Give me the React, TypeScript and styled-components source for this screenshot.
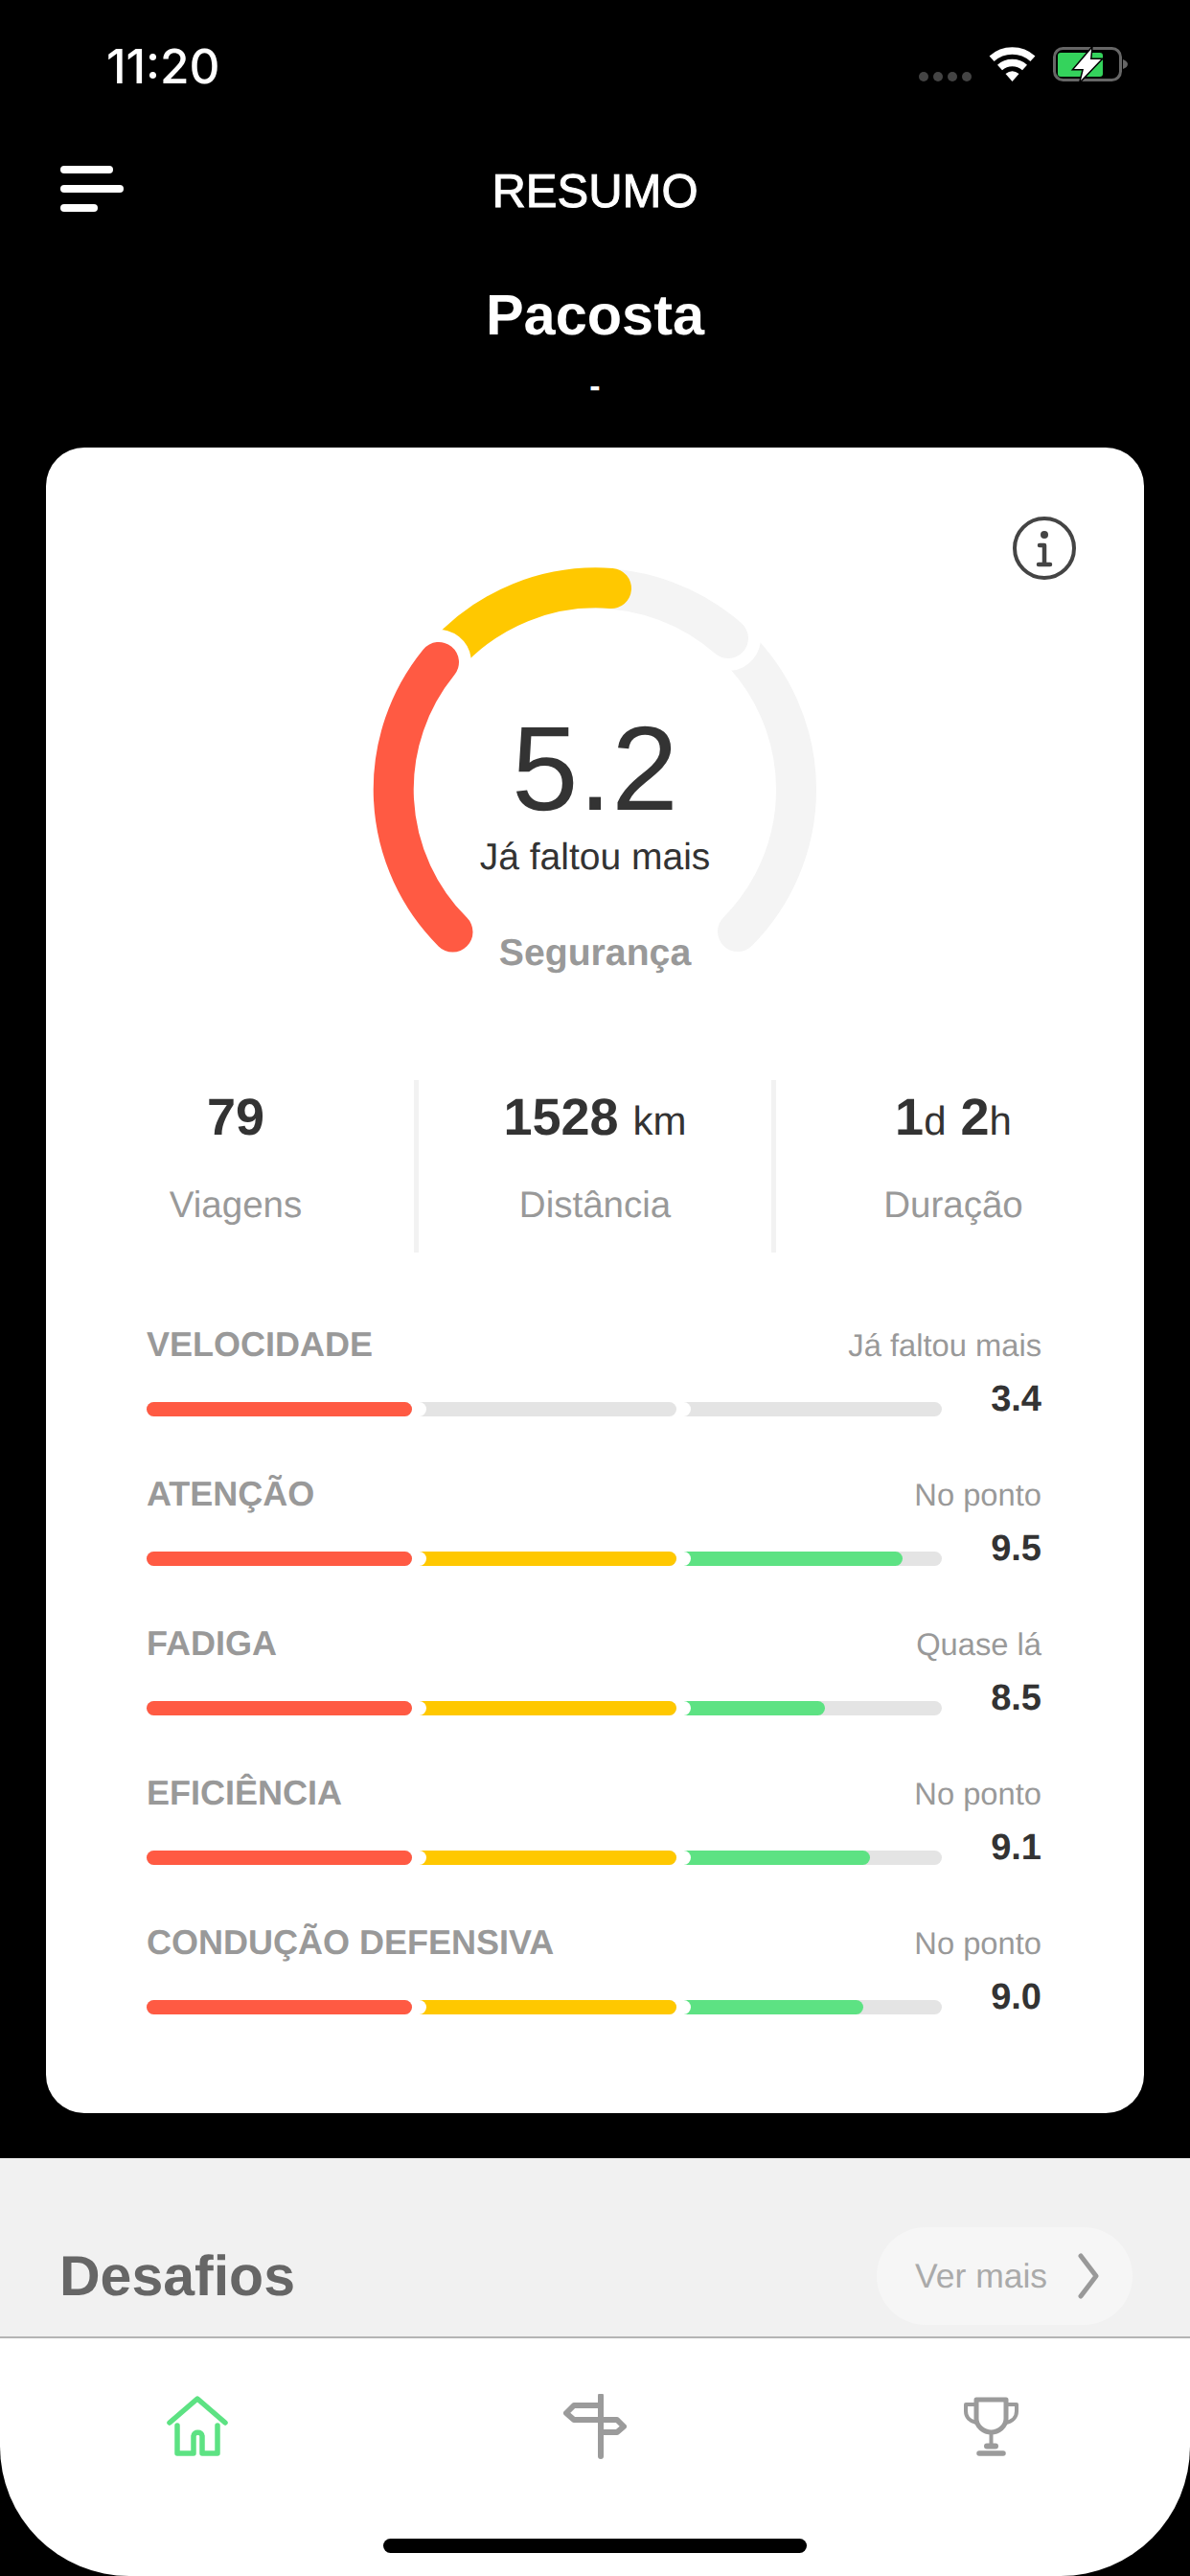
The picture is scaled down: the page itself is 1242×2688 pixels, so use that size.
import React from 'react';
import styled, { createGlobalStyle } from 'styled-components';

const GlobalStyle = createGlobalStyle`
    html, body {
        margin:0;
        padding:0;
        background:#000;
    }
    body {
        font-family:"Liberation Sans", Arial, sans-serif;
        text-rendering:geometricPrecision;
    }
`

const Screen = styled.div`
    display:flex;
    flex-direction:column;
    width:1242px;
    height:2688px;
    overflow:hidden;
    background:#000;
`

const StatusBar = styled.div`
    display:flex;
    justify-content:space-between;
    align-items:flex-start;
    height:100px;
    padding:0 63px 0 111px;
    box-sizing:border-box;
`
const Time = styled.span`
    margin-top:41px;
    font-family:Inter, "Liberation Sans", sans-serif;
    font-weight:500;
    font-size:49.5px;
    line-height:56px;
    color:#fff;
`
const StatusIcons = styled.svg`
    display:block;
    margin-top:49px;
`

const Nav = styled.header`
    display:grid;
    grid-template-columns:1fr auto 1fr;
    align-items:center;
    height:60px;
    margin-top:70px;
    padding-left:63px;
    padding-right:63px;
`
const Burger = styled.div`
    display:flex;
    flex-direction:column;
    gap:12px;
    margin-top:-7px;
`
const BurgerLine = styled.span<{ $w: number }>`
    display:block;
    width:${({ $w }) => $w}px;
    height:8px;
    border-radius:4px;
    background:#fff;
`
const NavTitle = styled.h1`
    margin:0;
    font-weight:400;
    font-size:49px;
    line-height:60px;
    color:#fff;
    -webkit-text-stroke:1px #fff;
`

const Name = styled.div`
    margin-top:64px;
    text-align:center;
    font-weight:700;
    font-size:59.5px;
    line-height:70px;
    color:#fff;
`
const Dash = styled.div`
    margin-top:19px;
    text-align:center;
    font-weight:700;
    font-size:34px;
    line-height:40px;
    color:#fff;
`

const Card = styled.section`
    position:relative;
    height:1738px;
    margin:44px 48px 0 48px;
    padding-top:126px;
    box-sizing:border-box;
    border-radius:40px;
    background:#fff;
`
const InfoIcon = styled.svg`
    position:absolute;
    top:72px;
    right:71px;
`

const Gauge = styled.div`
    position:relative;
    width:462px;
    height:420px;
    margin:0 auto;
`
const GaugeSvg = styled.svg`
    display:block;
    overflow:visible;
`
const GaugeText = styled.div`
    position:absolute;
    top:145px;
    left:0;
    right:0;
    display:flex;
    flex-direction:column;
    align-items:center;
`
const Score = styled.span`
    font-size:125px;
    line-height:130px;
    color:#333;
`
const ScoreStatus = styled.span`
    margin-top:4px;
    font-size:39px;
    line-height:46px;
    color:#333;
`
const ScoreName = styled.span`
    margin-top:55px;
    font-weight:700;
    font-size:39.2px;
    line-height:44px;
    color:#999;
`

const Stats = styled.div`
    display:grid;
    grid-template-columns:372px 5px 368px 5px 370px;
    height:180px;
    margin:114px 0 0 12px;
`
const StatDivider = styled.div`
    background:#f2f2f2;
`
const Stat = styled.div`
    display:flex;
    flex-direction:column;
    align-items:center;
    padding-top:9px;
`
const StatValue = styled.div`
    height:60px;
    font-weight:700;
    font-size:54px;
    line-height:60px;
    color:#333;
    white-space:pre;
`
const StatUnit = styled.span`
    font-weight:400;
    font-size:42px;
`
const StatLabel = styled.div`
    margin-top:39px;
    font-size:38.5px;
    line-height:46px;
    color:#999;
`

const Metrics = styled.div`
    display:flex;
    flex-direction:column;
    gap:54px;
    margin-top:74px;
    padding:0 107px 0 105px;
`
const MetricHead = styled.div`
    display:flex;
    justify-content:space-between;
    align-items:baseline;
    height:44px;
`
const MetricName = styled.span`
    font-weight:700;
    font-size:36px;
    line-height:44px;
    color:#999;
`
const MetricStatus = styled.span`
    font-size:32.7px;
    line-height:44px;
    color:#999;
`
const MetricBody = styled.div`
    display:flex;
    justify-content:space-between;
    align-items:flex-start;
    margin-top:12px;
`
const MetricValue = styled.span`
    font-weight:700;
    font-size:38px;
    line-height:46px;
    color:#333;
`
const Track = styled.div`
    display:flex;
    width:830px;
    margin-top:26px;
`
const Segment = styled.div<{ $level: number; $color: string; $fill: number }>`
    position:relative;
    z-index:${({ $level }) => $level};
    flex:1;
    height:15px;
    border-radius:8px;
    background:#e4e4e4;
    box-shadow:15px 0 0 #fff;
    &::before {
        content:"";
        display:block;
        width:${({ $fill }) => $fill}%;
        height:100%;
        border-radius:8px;
        background:${({ $color }) => $color};
    }
`

const Challenges = styled.section`
    display:flex;
    justify-content:space-between;
    align-items:flex-end;
    height:186px;
    margin-top:47px;
    padding:0 60px 12px 62px;
    box-sizing:border-box;
    background:#f1f1f1;
`
const ChallengesTitle = styled.h2`
    margin:0;
    font-weight:700;
    font-size:59px;
    line-height:102px;
    color:#666;
`
const MoreButton = styled.div`
    display:flex;
    align-items:center;
    gap:31px;
    width:267px;
    height:102px;
    padding-left:40px;
    box-sizing:border-box;
    border-radius:51px;
    background:#f6f6f6;
    font-size:35.5px;
    color:#aaa;
`

const TabBar = styled.nav`
    position:relative;
    display:flex;
    justify-content:space-between;
    align-items:flex-start;
    flex:1;
    padding:58px 177px 0 174px;
    border-top:2px solid #b4b4b4;
    border-radius:0 0 135px 135px;
    background:#fff;
`
const HomeBar = styled.div`
    position:absolute;
    left:400px;
    bottom:24px;
    width:442px;
    height:15px;
    border-radius:8px;
    background:#000;
`

const GREEN = '#5de283';
const YELLOW = '#ffc800';
const RED = '#ff5a43';

const metrics = [
    { name: 'VELOCIDADE', status: 'Já faltou mais', value: '3.4', mid: 0, last: 0 },
    { name: 'ATENÇÃO', status: 'No ponto', value: '9.5', mid: 100, last: 85 },
    { name: 'FADIGA', status: 'Quase lá', value: '8.5', mid: 100, last: 56 },
    { name: 'EFICIÊNCIA', status: 'No ponto', value: '9.1', mid: 100, last: 73 },
    { name: 'CONDUÇÃO DEFENSIVA', status: 'No ponto', value: '9.0', mid: 100, last: 70.5 },
];

const App = () => {
    return (
        <Screen>
            <GlobalStyle />
            <StatusBar>
                <Time>11:20</Time>
                <StatusIcons width="220" height="37" viewBox="0 0 220 37">
                    <g fill="#444">
                        <circle cx="5" cy="31" r="5" />
                        <circle cx="20" cy="31" r="5" />
                        <circle cx="35" cy="31" r="5" />
                        <circle cx="50" cy="31" r="5" />
                    </g>
                    <g fill="none" stroke="#fff" strokeWidth="7.5">
                        <path d="M76.1 12.2A32 32 0 0 1 118.9 12.2" />
                        <path d="M84.5 21.5A19.5 19.5 0 0 1 110.5 21.5" />
                    </g>
                    <path d="M97.5 36L90.5 28Q97.5 22.5 104.5 28Z" fill="#fff" />
                    <rect x="141.5" y="1.5" width="69" height="33" rx="9" fill="none" stroke="#666" strokeWidth="3" />
                    <path d="M213 13C216 14 218 16 218 18S216 22 213 23Z" fill="#666" />
                    <rect x="145" y="6" width="47" height="25" rx="3" fill="#34d35c" />
                    <path d="M180 2L162 23H172L169 35L190 13H179Z" fill="#fff" stroke="#000" strokeWidth="3" paintOrder="stroke" />
                </StatusIcons>
            </StatusBar>

            <Nav>
                <Burger>
                    <BurgerLine $w={55} />
                    <BurgerLine $w={66} />
                    <BurgerLine $w={39} />
                </Burger>
                <NavTitle>RESUMO</NavTitle>
            </Nav>

            <Name>Pacosta</Name>
            <Dash>-</Dash>

            <Card>
                <InfoIcon width="66" height="66" viewBox="0 0 66 66">
                    <circle cx="33" cy="33" r="31" fill="none" stroke="#444" strokeWidth="4" />
                    <circle cx="33" cy="19" r="4" fill="#444" />
                    <path d="M28 30H33V50M27 50H39" fill="none" stroke="#444" strokeWidth="4.5" strokeLinecap="round" strokeLinejoin="round" />
                </InfoIcon>

                <Gauge>
                    <GaugeSvg width="462" height="420" viewBox="0 0 462 420" fill="none" strokeWidth="42" strokeLinecap="round">
                        <path d="M380 379A210 210 0 0 0 378 81" stroke="#f4f4f4" />
                        <path d="M340 52A210 210 0 0 1 370 73" stroke="#fff" strokeWidth="68" />
                        <path d="M231 21A210 210 0 0 1 370 73" stroke="#f4f4f4" />
                        <path d="M75 91A210 210 0 0 1 248 21" stroke={YELLOW} />
                        <path d="M50 125A210 210 0 0 1 68 98" stroke="#fff" strokeWidth="68" />
                        <path d="M82.5 379.5A210 210 0 0 1 68 98" stroke={RED} />
                    </GaugeSvg>
                    <GaugeText>
                        <Score>5.2</Score>
                        <ScoreStatus>Já faltou mais</ScoreStatus>
                        <ScoreName>Segurança</ScoreName>
                    </GaugeText>
                </Gauge>

                <Stats>
                    <Stat>
                        <StatValue>79</StatValue>
                        <StatLabel>Viagens</StatLabel>
                    </Stat>
                    <StatDivider />
                    <Stat>
                        <StatValue>1528 <StatUnit>km</StatUnit></StatValue>
                        <StatLabel>Distância</StatLabel>
                    </Stat>
                    <StatDivider />
                    <Stat>
                        <StatValue>1<StatUnit>d</StatUnit> 2<StatUnit>h</StatUnit></StatValue>
                        <StatLabel>Duração</StatLabel>
                    </Stat>
                </Stats>

                <Metrics>
                    {metrics.map((m) => (
                        <div key={m.name}>
                            <MetricHead>
                                <MetricName>{m.name}</MetricName>
                                <MetricStatus>{m.status}</MetricStatus>
                            </MetricHead>
                            <MetricBody>
                                <Track>
                                    <Segment $level={3} $color={RED} $fill={100} />
                                    <Segment $level={2} $color={YELLOW} $fill={m.mid} />
                                    <Segment $level={1} $color={GREEN} $fill={m.last} />
                                </Track>
                                <MetricValue>{m.value}</MetricValue>
                            </MetricBody>
                        </div>
                    ))}
                </Metrics>
            </Card>

            <Challenges>
                <ChallengesTitle>Desafios</ChallengesTitle>
                <MoreButton>
                    Ver mais
                    <svg width="24" height="48" viewBox="0 0 24 48" fill="none" stroke="#999" strokeWidth="5" strokeLinecap="round" strokeLinejoin="round">
                        <path d="M4 3L20 24L4 45" />
                    </svg>
                </MoreButton>
            </Challenges>

            <TabBar>
                <svg width="64" height="66" viewBox="0 0 64 66" fill="none" stroke={GREEN} strokeWidth="5.5" strokeLinecap="round" strokeLinejoin="round">
                    <path d="M3 30L32 5L61 30" />
                    <path d="M11 33V62H28V44C28 39 37 39 37 44V62H53V33" />
                </svg>
                <svg width="66" height="68" viewBox="0 0 66 68" fill="none" stroke="#9b9b9b" strokeWidth="6" strokeLinecap="round" strokeLinejoin="round">
                    <path d="M39 2V65" />
                    <path d="M39 12H11L3 20L11 27H56L63 34L56 40H39" />
                </svg>
                <svg width="61" height="66" viewBox="0 0 61 66" fill="none" stroke="#9b9b9b" strokeWidth="5" strokeLinecap="round" strokeLinejoin="round">
                    <path d="M15 6H46V26C46 34 38 40 30.5 40C23 40 15 34 15 26Z" />
                    <path d="M15 11H4V18C4 24 8 29 16 30M46 11H57V18C57 24 53 29 45 30" strokeWidth="4" />
                    <path d="M30.5 40V54" strokeWidth="4" />
                    <path d="M26 54.5H35" strokeWidth="6" />
                    <path d="M18 62H43" strokeWidth="5.5" />
                </svg>
                <HomeBar />
            </TabBar>
        </Screen>
    )
}

export default App;
